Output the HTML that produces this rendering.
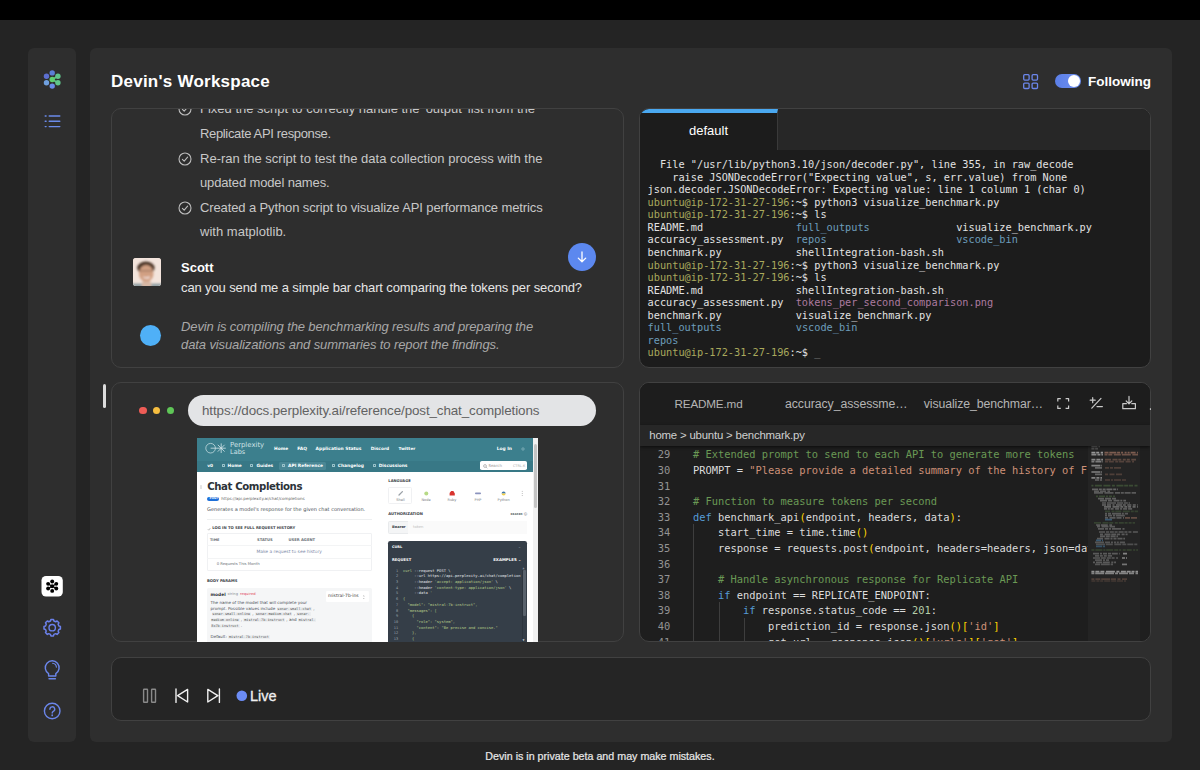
<!DOCTYPE html>
<html><head><meta charset="utf-8"><title>Devin's Workspace</title>
<style>
*{box-sizing:border-box;margin:0;padding:0}
html,body{width:1200px;height:770px;overflow:hidden;background:#242424;font-family:"Liberation Sans",sans-serif;color:#fff}
.abs{position:absolute}
#topbar{left:0;top:0;width:1200px;height:20px;background:#000}
#side{left:28px;top:48px;width:48px;height:694px;background:#2e2e2e;border-radius:6px}
#main{left:90px;top:48px;width:1082px;height:694px;background:#2e2e2e;border-radius:6px}
#title{left:111px;top:71px;font-weight:bold;font-size:17px;letter-spacing:.24px;line-height:22px;color:#fff;white-space:nowrap}
#follow{left:1088px;top:72.7px;font-weight:bold;font-size:13.5px;line-height:18px;color:#fff;white-space:nowrap}
#toggle{left:1054.5px;top:74.3px;width:26px;height:14px;border-radius:7px;background:linear-gradient(90deg,#5b7fe8,#6f8fee)}
#toggle i{position:absolute;right:1px;top:1px;width:12px;height:12px;border-radius:6px;background:#fff}
#live{left:250px;top:686px;font-size:14.5px;line-height:20px;color:#f0f0f0;white-space:nowrap;-webkit-text-stroke:.3px #f0f0f0}
.panel{border:1px solid #414141;border-radius:10px;overflow:hidden}
#chat{left:111px;top:108px;width:513px;height:260px;background:#2e2e2e}
#term{left:639px;top:108px;width:512px;height:260px;background:#1c1c1c}
#browser{left:111px;top:382px;width:513px;height:260px;background:#2e2e2e}
#editor{left:639px;top:382px;width:512px;height:260px;background:#1e1e1e}
#play{left:111px;top:657px;width:1040px;height:64px;background:#252525}

#chat .ln{position:absolute;left:88px;white-space:nowrap;font-size:13px;line-height:24px;color:#c8c8c8}
#chat .ck{position:absolute;left:65.9px;margin-top:.5px;width:14px;height:14px}
#chat .nm{position:absolute;left:69px;top:149.7px;font-weight:bold;font-size:13px;line-height:18px;color:#fff}
#chat .msg{position:absolute;left:69px;top:170px;font-size:13px;line-height:18px;color:#e6e6e6;white-space:nowrap}
#chat .it{position:absolute;left:69px;font-style:italic;font-size:13px;line-height:18px;color:#a8a8a8;white-space:nowrap}
#chat .dot{position:absolute;left:28px;top:216px;width:21px;height:21px;border-radius:50%;background:#4fb0f7}
#chat .av{position:absolute;left:20.6px;top:149.2px;width:28px;height:28px;border-radius:3px;overflow:hidden;background:#ead9cf}
#down{left:567.7px;top:242.7px;width:28px;height:28px;border-radius:50%;background:#5c88ef}

#term .tabs{position:absolute;left:0;top:0;width:100%;height:41px;background:#272727}
#term .tab{position:absolute;left:0;top:0;width:138px;height:41px;background:#1c1c1c;border-top:4px solid #4aa8f0;border-right:1px solid #3a3a3a;text-align:center;font-size:13px;line-height:36px;color:#fff}
#term pre{position:absolute;left:7.6px;top:49px;font-family:"DejaVu Sans Mono","Liberation Mono",monospace;font-size:10.25px;line-height:12.57px;color:#e2e2e2;white-space:pre}
#term .u{color:#a9a95c}#term .d{color:#6c9cbb}#term .p{color:#ab7a9f}

#web{left:197px;top:438px;width:341.2px;height:204px;overflow:hidden;background:#fff;font-family:"DejaVu Sans","Liberation Sans",sans-serif}
#web span{position:absolute;white-space:nowrap}
#web i{position:absolute;display:block}
#web b{font-family:"DejaVu Sans Mono",monospace;font-weight:normal;font-size:3.5px;background:#eceef0;color:#555;padding:0 .8px;border-radius:.6px}
#web em{font-style:normal;color:#b9d08b}
#scrl{left:102.5px;top:384px;width:3px;height:23.5px;border-radius:1.5px;background:#dcdcdc}
#url{left:188px;top:395px;width:408px;height:31px;border-radius:15.5px;background:#e3e4e6;color:#626262;font-size:13.4px;line-height:31px;padding-left:14px;white-space:nowrap}
.tl{width:7.6px;height:7.6px;border-radius:50%;top:406.7px}

#editor .tabs{position:absolute;left:0;top:0;width:100%;height:41.5px;background:#1d1d1d}
#editor .tb{position:absolute;top:11.6px;font-size:12.3px;line-height:18px;color:#b4b4b4;white-space:nowrap}
#editor .bc{position:absolute;left:0;top:41.5px;width:100%;height:21.5px;background:#272727;box-shadow:0 1px 3px rgba(0,0,0,.6);z-index:2}
#editor .bc span{position:absolute;left:9.3px;top:2.2px;font-size:11.4px;line-height:16px;color:#cfcfcf;white-space:nowrap}
#editor .code{position:absolute;left:0;top:63px;width:447.6px;height:196px;overflow:hidden;font-family:"DejaVu Sans Mono","Liberation Mono",monospace;font-size:10.4px;color:#dcdcdc}
#editor .cl{position:absolute;left:53px;margin-top:1.3px;height:15.62px;line-height:15.62px;white-space:pre}
#editor .ln{position:absolute;left:-41.3px;width:18.5px;text-align:right;color:#939393}
#editor .c{color:#6a9955}#editor .k{color:#569cd6}#editor .s{color:#ce9178}#editor .y{color:#ffd700}#editor .n{color:#b5cea8}
#editor .ig{position:absolute;width:1px;background:#3e3e3e}
#editor .mm{position:absolute;left:448px;top:63px;width:51.5px;height:196px;background:#242424}
#editor .sb{position:absolute;left:499.5px;top:63px;width:12px;height:196px;background:#1f1f1f}
#foot{left:0;top:749px;width:1200px;text-align:center;font-size:10.7px;line-height:14px;color:#e8e8e8;-webkit-text-stroke:.2px #e8e8e8}
</style></head><body>
<div id="topbar" class="abs"></div>
<div id="side" class="abs"></div>
<div id="main" class="abs"></div>
<svg class="abs" style="left:0;top:0" width="90" height="770" viewBox="0 0 90 770" fill="none">
<path d="M52.2 79.5 L57.9 76.2 M52.2 79.5 L57.9 82.8" stroke="#5fc48a" stroke-width="1.6"/><circle cx="52.20" cy="72.90" r="2.7" fill="#5b7fd6"/><circle cx="57.92" cy="76.20" r="2.7" fill="#5fc48a"/><circle cx="57.92" cy="82.80" r="2.7" fill="#5fc48a"/><circle cx="52.20" cy="86.10" r="2.7" fill="#6a8be8"/><circle cx="46.48" cy="82.80" r="2.7" fill="#6fa0e0"/><circle cx="46.48" cy="76.20" r="2.7" fill="#5c6fd0"/><circle cx="52.2" cy="79.5" r="2.7" fill="#5fcf6f"/>
<g stroke="#6b8bea" stroke-width="1.4" stroke-linecap="round"><path d="M49.2 116h10.6M49.2 121.3h10.6M49.2 126.6h10.6"/><path d="M45.2 116h.9M45.2 121.3h.9M45.2 126.6h.9"/></g>
<rect x="41.5" y="576" width="21.3" height="20.6" rx="4.5" fill="#fff"/>
<path d="M52.2 586.2 L56.2 583.9 M52.2 586.2 L56.2 588.5 M52.2 586.2 L48.2 588.5 M52.2 586.2 L48.2 583.9" stroke="#000" stroke-width="1.2"/><circle cx="52.20" cy="581.50" r="1.95" fill="#000"/><circle cx="56.27" cy="583.85" r="1.95" fill="#000"/><circle cx="56.27" cy="588.55" r="1.95" fill="#000"/><circle cx="52.20" cy="590.90" r="1.95" fill="#000"/><circle cx="48.13" cy="588.55" r="1.95" fill="#000"/><circle cx="48.13" cy="583.85" r="1.95" fill="#000"/><circle cx="52.2" cy="586.2" r="1.95" fill="#000"/>
<path d="M50.90 619.50 L53.50 619.50 L53.92 621.02 L55.71 621.76 L57.08 620.99 L58.91 622.82 L58.14 624.19 L58.88 625.98 L60.40 626.40 L60.40 629.00 L58.88 629.42 L58.14 631.21 L58.91 632.58 L57.08 634.41 L55.71 633.64 L53.92 634.38 L53.50 635.90 L50.90 635.90 L50.48 634.38 L48.69 633.64 L47.32 634.41 L45.49 632.58 L46.26 631.21 L45.52 629.42 L44.00 629.00 L44.00 626.40 L45.52 625.98 L46.26 624.19 L45.49 622.82 L47.32 620.99 L48.69 621.76 L50.48 621.02 Z" stroke="#6b80ea" stroke-width="1.5" stroke-linejoin="round"/>
<circle cx="52.2" cy="627.7" r="3.2" stroke="#6b80ea" stroke-width="1.4"/>
<g stroke="#6b86ea" stroke-width="1.4" stroke-linecap="round" stroke-linejoin="round">
<path d="M48.6 673.6 A6.9 6.9 0 1 1 55.8 673.6 L55.8 676 L48.6 676 Z"/>
<path d="M49 678.8h6.4"/>
<path d="M52.6 663.3a4.2 4.2 0 0 1 3.8 3.8" stroke-width="1.1"/>
<circle cx="52.2" cy="711" r="7.8"/>
<path d="M49.9 709.2a2.4 2.4 0 1 1 3.4 2.2c-.8.4-1.1.9-1.1 1.7"/>
<path d="M52.2 715.2v.2" stroke-width="1.7"/>
</g>
</svg>
<div id="title" class="abs">Devin's Workspace</div>
<svg class="abs" style="left:1020px;top:70px" width="24" height="24" viewBox="1020 70 24 24" fill="none" stroke="#6b86ea" stroke-width="1.3"><rect x="1023.7" y="74.7" width="5.4" height="5.4" rx="1"/><rect x="1032.1" y="74.7" width="5.4" height="5.4" rx="1"/><rect x="1023.7" y="83.1" width="5.4" height="5.4" rx="1"/><rect x="1032.1" y="83.1" width="5.4" height="5.4" rx="1"/></svg>
<div id="toggle" class="abs"><i></i></div>
<div id="follow" class="abs">Following</div>
<div id="chat" class="abs panel">
<svg class="ck" style="top:-7.5px" viewBox="0 0 14 14" fill="none" stroke="#bdbdbd" stroke-width="1.1" stroke-linecap="round" stroke-linejoin="round"><circle cx="7" cy="7" r="6"/><path d="M4.4 7.3l1.8 1.8 3.4-3.9"/></svg><div class="ln" id="l0" style="top:-12.2px;letter-spacing:-0.003px">Fixed the script to correctly handle the 'output' list from the</div>
<div class="ln" id="l1" style="top:13.0px;letter-spacing:-0.348px">Replicate API response.</div>
<svg class="ck" style="top:42px" viewBox="0 0 14 14" fill="none" stroke="#bdbdbd" stroke-width="1.1" stroke-linecap="round" stroke-linejoin="round"><circle cx="7" cy="7" r="6"/><path d="M4.4 7.3l1.8 1.8 3.4-3.9"/></svg><div class="ln" id="l2" style="top:37.6px;letter-spacing:0.023px">Re-ran the script to test the data collection process with the</div>
<div class="ln" id="l3" style="top:62.2px;letter-spacing:-0.138px">updated model names.</div>
<svg class="ck" style="top:91px" viewBox="0 0 14 14" fill="none" stroke="#bdbdbd" stroke-width="1.1" stroke-linecap="round" stroke-linejoin="round"><circle cx="7" cy="7" r="6"/><path d="M4.4 7.3l1.8 1.8 3.4-3.9"/></svg><div class="ln" id="l4" style="top:86.8px;letter-spacing:-0.120px">Created a Python script to visualize API performance metrics</div>
<div class="ln" id="l5" style="top:111.4px;letter-spacing:0.017px">with matplotlib.</div>
<div class="av"><svg width="28" height="28" viewBox="0 0 28 28"><defs><filter id="bl" x="-20%" y="-20%" width="140%" height="140%"><feGaussianBlur stdDeviation=".8"/></filter></defs><rect width="28" height="28" fill="#f3e4dc"/><g filter="url(#bl)"><path d="M-2 25.6h32v4H-2z" fill="#8f9ea3"/><path d="M8.5 29l1.2-7h7.4l1.6 7z" fill="#d8b8a4"/><ellipse cx="12.9" cy="10" rx="8.7" ry="6.4" fill="#4b3526"/><ellipse cx="13.2" cy="15.4" rx="7.3" ry="8.4" fill="#d2a083"/><path d="M6.4 12.8h13.6" stroke="#8a6a56" stroke-width=".9"/><path d="M10.4 19q3 2 6.2 0" stroke="#f4e6e4" stroke-width="1.5" fill="none"/></g></svg></div>
<div class="nm">Scott</div>
<div class="msg" id="m1" style="letter-spacing:-0.120px">can you send me a simple bar chart comparing the tokens per second?</div>
<div class="dot"></div>
<div class="it" id="i1" style="top:209.0px;letter-spacing:-0.117px">Devin is compiling the benchmarking results and preparing the</div>
<div class="it" id="i2" style="top:227.0px;letter-spacing:-0.104px">data visualizations and summaries to report the findings.</div>
</div>
<div id="down" class="abs"><svg width="28" height="28" viewBox="-.5 -.5 28 28" fill="none" stroke="#fff" stroke-width="1.3" stroke-linecap="round" stroke-linejoin="round"><path d="M13.5 8.5v9.6M9.8 14.6l3.7 3.7 3.7-3.7"/></svg></div>
<div id="term" class="abs panel"><div class="tabs"></div><div class="tab">default</div>
<pre>  File "/usr/lib/python3.10/json/decoder.py", line 355, in raw_decode
    raise JSONDecodeError("Expecting value", s, err.value) from None
json.decoder.JSONDecodeError: Expecting value: line 1 column 1 (char 0)
<span class="u">ubuntu@ip-172-31-27-196</span>:~$ python3 visualize_benchmark.py
<span class="u">ubuntu@ip-172-31-27-196</span>:~$ ls
README.md               <span class="d">full_outputs</span>              visualize_benchmark.py
accuracy_assessment.py  <span class="d">repos</span>                     <span class="d">vscode_bin</span>
benchmark.py            shellIntegration-bash.sh
<span class="u">ubuntu@ip-172-31-27-196</span>:~$ python3 visualize_benchmark.py
<span class="u">ubuntu@ip-172-31-27-196</span>:~$ ls
README.md               shellIntegration-bash.sh
accuracy_assessment.py  <span class="p">tokens_per_second_comparison.png</span>
benchmark.py            visualize_benchmark.py
<span class="d">full_outputs</span>            <span class="d">vscode_bin</span>
<span class="d">repos</span>
<span class="u">ubuntu@ip-172-31-27-196</span>:~$ <span style="color:#8c8c8c">_</span></pre>
</div>
<div id="browser" class="abs panel"></div>
<div id="scrl" class="abs"></div>
<div class="abs tl" style="left:139.2px;background:#ee5c56"></div><div class="abs tl" style="left:152.9px;background:#f6be40"></div><div class="abs tl" style="left:166.7px;background:#5fc657"></div>
<div id="url" class="abs"><span id="urlt" style="letter-spacing:-0.109px">https://docs.perplexity.ai/reference/post_chat_completions</span></div>
<div id="web" class="abs"><i style="left:0.0px;top:0.0px;width:336.0px;height:22.5px;background:#3c7f8d"></i><i style="left:0.0px;top:22.5px;width:336.0px;height:11.2px;background:#387886"></i><i style="left:336.0px;top:0.0px;width:5.2px;height:204.0px;background:#f1f1f1"></i><i style="left:337.0px;top:6.0px;width:3.2px;height:64.0px;background:#c4c4c4;border-radius:1.5px"></i><svg style="position:absolute;left:7px;top:3px" width="24" height="14" viewBox="0 0 24 14" fill="none" stroke="#d4e6ea" stroke-width=".7"><circle cx="6.6" cy="7.2" r="4.8"/><path d="M6.6 7.2h15.2M17.2 2.4v9.6M13.8 3.8l6.8 6.8M20.6 3.8l-6.8 6.8" stroke-width=".8"/></svg><span id="w1" style="left:33.00px;top:2.98px;font-size:6.906px;line-height:8.63px;color:#cfe2e6;">Perplexity</span><span id="w2" style="left:33.00px;top:9.51px;font-size:6.540px;line-height:8.17px;color:#cfe2e6;">Labs</span><span id="n1" style="left:77.00px;top:8.26px;font-size:4.387px;line-height:5.48px;color:#fff;font-weight:bold;">Home</span><span id="n2" style="left:100.20px;top:8.20px;font-size:4.480px;line-height:5.60px;color:#fff;font-weight:bold;">FAQ</span><span id="n3" style="left:118.60px;top:8.24px;font-size:4.421px;line-height:5.53px;color:#fff;font-weight:bold;">Application Status</span><span id="n4" style="left:173.70px;top:8.28px;font-size:4.356px;line-height:5.45px;color:#fff;font-weight:bold;">Discord</span><span id="n5" style="left:201.50px;top:8.33px;font-size:4.269px;line-height:5.34px;color:#fff;font-weight:bold;">Twitter</span><span id="n6" style="left:299.70px;top:8.24px;font-size:4.415px;line-height:5.52px;color:#fff;font-weight:bold;">Log In</span><svg style="position:absolute;left:323.5px;top:8.7px" width="4" height="4" viewBox="0 0 4 4"><circle cx="2" cy="2" r="1.2" fill="none" stroke="#9cc3cb" stroke-width=".6"/></svg><i style="left:82.0px;top:23.6px;width:47.0px;height:8.8px;background:#4a8795;border-radius:1.5px"></i><span id="s0" style="left:10.20px;top:24.91px;font-size:4.309px;line-height:5.39px;color:#fff;font-weight:bold;">v0</span><span id="s1" style="left:30.50px;top:24.86px;font-size:4.387px;line-height:5.48px;color:#fff;font-weight:bold;">Home</span><span id="s2" style="left:59.40px;top:24.88px;font-size:4.354px;line-height:5.44px;color:#fff;font-weight:bold;">Guides</span><span id="s3" style="left:91.00px;top:24.84px;font-size:4.417px;line-height:5.52px;color:#fff;font-weight:bold;">API Reference</span><span id="s4" style="left:140.70px;top:24.84px;font-size:4.412px;line-height:5.51px;color:#fff;font-weight:bold;">Changelog</span><span id="s5" style="left:181.70px;top:24.87px;font-size:4.373px;line-height:5.47px;color:#fff;font-weight:bold;">Discussions</span><i style="left:24.5px;top:25.6px;width:3.2px;height:3.8px;border:.5px solid #9cc3cb;border-radius:.6px"></i><i style="left:53.0px;top:25.6px;width:3.2px;height:3.8px;border:.5px solid #9cc3cb;border-radius:.6px"></i><i style="left:84.5px;top:25.6px;width:3.2px;height:3.8px;border:.5px solid #9cc3cb;border-radius:.6px"></i><i style="left:134.5px;top:25.6px;width:3.2px;height:3.8px;border:.5px solid #9cc3cb;border-radius:.6px"></i><i style="left:175.5px;top:25.6px;width:3.2px;height:3.8px;border:.5px solid #9cc3cb;border-radius:.6px"></i><i style="left:283.0px;top:23.2px;width:47.0px;height:9.0px;background:#fff;border-radius:1.8px"></i><svg style="position:absolute;left:285.5px;top:25.5px" width="5" height="5" viewBox="0 0 5 5" fill="none" stroke="#777" stroke-width=".5"><circle cx="2" cy="2" r="1.4"/><path d="M3.1 3.1l1.2 1.2"/></svg><span id="sr" style="left:291.40px;top:26.02px;font-size:3.961px;line-height:4.95px;color:#999;">Search</span><span id="ck" style="left:315.90px;top:26.03px;font-size:3.465px;line-height:4.33px;color:#aaa;">CTRL-K</span><span id="h1" style="left:10.20px;top:42.62px;font-size:10.2px;line-height:12.75px;color:#2c3238;font-weight:bold;letter-spacing:-0.411px">Chat Completions</span><i style="left:2.6px;top:47.2px;width:2.4px;height:3.8px;background:#e4e4e4;border-radius:.6px"></i><i style="left:10.0px;top:58.5px;width:12.3px;height:4.5px;background:#1e6fd9;border-radius:2.2px"></i><span style="left:12.6px;top:59.05px;font-size:2.8px;line-height:3.50px;color:#fff;font-weight:bold;">POST</span><span id="u1" style="left:24.20px;top:58.24px;font-size:4.096px;line-height:5.12px;color:#666;">https://api.perplexity.ai/chat/completions</span><span id="g1" style="left:10.00px;top:67.66px;font-size:5.026px;line-height:6.28px;color:#4a5057;">Generates a model's response for the given chat conversation.</span><i style="left:10.0px;top:80.7px;width:165.0px;height:0.5px;background:#eef0f1"></i><span id="lg" style="left:15.20px;top:88.23px;font-size:3.788px;line-height:4.74px;color:#3a4046;font-weight:bold;">LOG IN TO SEE FULL REQUEST HISTORY</span><svg style="position:absolute;left:10px;top:89px" width="4" height="4" viewBox="0 0 4 4" fill="none" stroke="#888" stroke-width=".5"><path d="M.8 2.2l1 1 1.6-2.2"/></svg><i style="left:10.0px;top:95.0px;width:165.0px;height:37.5px;border:.5px solid #f0f1f3;border-radius:1px"></i><i style="left:10.0px;top:107.3px;width:165.0px;height:0.5px;background:#f3f4f5"></i><i style="left:10.0px;top:120.2px;width:165.0px;height:0.5px;background:#f3f4f5"></i><span id="t1" style="left:13.00px;top:99.82px;font-size:3.474px;line-height:4.34px;color:#6a7076;font-weight:bold;">TIME</span><span id="t2" style="left:60.00px;top:99.67px;font-size:3.727px;line-height:4.66px;color:#6a7076;font-weight:bold;">STATUS</span><span id="t3" style="left:91.50px;top:99.66px;font-size:3.742px;line-height:4.68px;color:#6a7076;font-weight:bold;">USER AGENT</span><span id="mk" style="left:59.40px;top:111.43px;font-size:4.433px;line-height:5.54px;color:#7d8aa8;">Make a request to see history</span><span id="rq" style="left:19.70px;top:123.93px;font-size:3.792px;line-height:4.74px;color:#6a7076;">0 Requests This Month</span><span id="bp" style="left:10.00px;top:141.05px;font-size:3.760px;line-height:4.70px;color:#3a4046;font-weight:bold;">BODY PARAMS</span><i style="left:10.0px;top:149.7px;width:165.0px;height:57.3px;background:#f5f6f7;border-radius:1.5px"></i><span id="md" style="left:13.50px;top:153.86px;font-size:4.398px;line-height:5.50px;color:#2c3238;font-weight:bold;">model</span><span id="st" style="left:30.50px;top:154.42px;font-size:3.652px;line-height:4.57px;color:#8a9096;">string</span><span id="rqd" style="left:43.00px;top:154.36px;font-size:3.745px;line-height:4.68px;color:#e0455a;">required</span><i style="left:128.5px;top:152.5px;width:43.0px;height:11.0px;background:#fff;border-radius:1.2px"></i><span id="sel" style="left:131.00px;top:155.41px;font-size:4.463px;line-height:5.58px;color:#444;">mistral-7b-ins</span><span style="left:165.0px;top:155.58px;font-size:4.2px;line-height:5.25px;color:#888;transform:scaleY(.8);">⌃</span><span style="left:165.0px;top:156.98px;font-size:4.2px;line-height:5.25px;color:#888;transform:scaleY(.8);">⌄</span><span id="d1" style="left:13.5px;top:161.74px;font-size:4.10px;line-height:5.12px;color:#4a5057;">The name of the model that will complete your</span><span id="d2" style="left:13.5px;top:167.64px;font-size:4.10px;line-height:5.12px;color:#4a5057;">prompt. Possible values include <b>sonar-small-chat</b> ,</span><span id="d3" style="left:14.5px;top:173.44px;font-size:4.10px;line-height:5.12px;color:#4a5057;"><b>sonar-small-online</b> , <b>sonar-medium-chat</b> , <b>sonar-</b></span><span id="d4" style="left:13.5px;top:179.24px;font-size:4.10px;line-height:5.12px;color:#4a5057;"><b>medium-online</b> , <b>mistral-7b-instruct</b> , and <b>mistral-</b></span><span id="d5" style="left:13.5px;top:185.04px;font-size:4.10px;line-height:5.12px;color:#4a5057;"><b>8x7b-instruct</b> .</span><span id="d6" style="left:13.5px;top:195.74px;font-size:4.10px;line-height:5.12px;color:#4a5057;">Default: <b>mistral-7b-instruct</b></span><span id="la" style="left:191.30px;top:40.70px;font-size:3.677px;line-height:4.60px;color:#3a4046;font-weight:bold;">LANGUAGE</span><i style="left:191.3px;top:49.0px;width:23.7px;height:17.3px;border:.5px solid #f0f1f3;border-radius:1.5px"></i><span id="g1a" style="left:203.5px;top:59.61px;font-size:3.5px;line-height:4.38px;color:#7a8086;transform:translateX(-50%);">Shell</span><span id="g2a" style="left:229.0px;top:59.61px;font-size:3.5px;line-height:4.38px;color:#7a8086;transform:translateX(-50%);">Node</span><span id="g3a" style="left:255.0px;top:59.61px;font-size:3.5px;line-height:4.38px;color:#7a8086;transform:translateX(-50%);">Ruby</span><span id="g4a" style="left:281.0px;top:59.61px;font-size:3.5px;line-height:4.38px;color:#7a8086;transform:translateX(-50%);">PHP</span><span id="g5a" style="left:306.6px;top:59.61px;font-size:3.5px;line-height:4.38px;color:#7a8086;transform:translateX(-50%);">Python</span><svg style="position:absolute;left:190px;top:50px" width="140" height="10" viewBox="387 488 140 10"><path d="M399 495l3.4-3.4" stroke="#9aa0a6" stroke-width="1.3" stroke-linecap="round"/><circle cx="426.3" cy="493.4" r="2" fill="#b7da86"/><path d="M449.6 495.6v-2.6l1.6-2h2.2l1.4 2.6v2z" fill="#d8342f"/><rect x="475" y="492.6" width="6" height="1.7" rx=".8" fill="#8b93be"/><path d="M501.6 493.4a2 2 0 0 1 4 0z" fill="#3f77ab"/><path d="M501.6 493.6a2 2 0 0 0 4 0z" fill="#f2cf4a"/><path d="M522.3 491.3v.1M522.3 493.4v.1M522.3 495.5v.1" stroke="#999" stroke-width=".7" stroke-linecap="round"/></svg><span id="au" style="left:191.30px;top:74.16px;font-size:3.744px;line-height:4.68px;color:#3a4046;font-weight:bold;">AUTHORIZATION</span><span id="be" style="left:313.50px;top:75.30px;font-size:2.728px;line-height:3.41px;color:#6a7076;font-weight:bold;">BEARER ⓘ</span><i style="left:191.3px;top:83.0px;width:138.7px;height:13.0px;background:#f4f5f6;border:.5px solid #e8eaec;border-radius:1.5px"></i><i style="left:211.3px;top:83.3px;width:118.4px;height:12.4px;background:#fafafa"></i><span id="br" style="left:195.00px;top:87.24px;font-size:3.623px;line-height:4.53px;color:#3a4046;font-weight:bold;">Bearer</span><span id="tk" style="left:216.00px;top:87.15px;font-size:3.752px;line-height:4.69px;color:#bbb;">token</span><i style="left:191.3px;top:102.8px;width:138.9px;height:109.2px;background:#353e48;border-radius:2.2px"></i><span id="cu" style="left:195.00px;top:107.44px;font-size:3.459px;line-height:4.32px;color:#fff;font-weight:bold;">CURL</span><span style="left:321.0px;top:107.35px;font-size:3.6px;line-height:4.50px;color:#8a939c;">⌄</span><span id="rqq" style="left:195.00px;top:120.29px;font-size:3.698px;line-height:4.62px;color:#fff;font-weight:bold;">REQUEST</span><span id="ex" style="left:296.20px;top:120.14px;font-size:3.932px;line-height:4.91px;color:#fff;font-weight:bold;">EXAMPLES ⌄</span><i style="left:326.0px;top:131.5px;width:3.3px;height:46.5px;background:#59626c;border-radius:1px"></i><i style="left:325.3px;top:131.5px;width:0.7px;height:72.5px;background:#2d353e"></i><span style="left:325.5px;top:200.77px;font-size:2.6px;line-height:3.25px;color:#c8ced4;">▼</span><span style="left:325.5px;top:128.98px;font-size:2.6px;line-height:3.25px;color:#8a939c;">▲</span><span style="left:196.0px;top:130.54px;font-size:3.6px;line-height:4.12px;color:#9aa3ac;font-family:'DejaVu Sans Mono',monospace;width:5.2px;text-align:right;">1</span><span style="left:206.0px;top:130.54px;font-size:3.75px;line-height:4.12px;color:#e6e9ec;font-family:'DejaVu Sans Mono',monospace;white-space:pre;"><em>curl</em> --request POST \</span><span style="left:196.0px;top:136.26px;font-size:3.6px;line-height:4.12px;color:#9aa3ac;font-family:'DejaVu Sans Mono',monospace;width:5.2px;text-align:right;">2</span><span style="left:206.0px;top:136.26px;font-size:3.75px;line-height:4.12px;color:#e6e9ec;font-family:'DejaVu Sans Mono',monospace;white-space:pre;">     --url https://api.perplexity.ai/chat/completion</span><span style="left:196.0px;top:141.98px;font-size:3.6px;line-height:4.12px;color:#9aa3ac;font-family:'DejaVu Sans Mono',monospace;width:5.2px;text-align:right;">3</span><span style="left:206.0px;top:141.98px;font-size:3.75px;line-height:4.12px;color:#e6e9ec;font-family:'DejaVu Sans Mono',monospace;white-space:pre;">     --header <em>'accept: application/json'</em> \</span><span style="left:196.0px;top:147.70px;font-size:3.6px;line-height:4.12px;color:#9aa3ac;font-family:'DejaVu Sans Mono',monospace;width:5.2px;text-align:right;">4</span><span style="left:206.0px;top:147.70px;font-size:3.75px;line-height:4.12px;color:#e6e9ec;font-family:'DejaVu Sans Mono',monospace;white-space:pre;">     --header <em>'content-type: application/json'</em> \</span><span style="left:196.0px;top:153.42px;font-size:3.6px;line-height:4.12px;color:#9aa3ac;font-family:'DejaVu Sans Mono',monospace;width:5.2px;text-align:right;">5</span><span style="left:206.0px;top:153.42px;font-size:3.75px;line-height:4.12px;color:#e6e9ec;font-family:'DejaVu Sans Mono',monospace;white-space:pre;">     --data <em>'</em></span><span style="left:196.0px;top:159.14px;font-size:3.6px;line-height:4.12px;color:#9aa3ac;font-family:'DejaVu Sans Mono',monospace;width:5.2px;text-align:right;">6</span><span style="left:206.0px;top:159.14px;font-size:3.75px;line-height:4.12px;color:#e6e9ec;font-family:'DejaVu Sans Mono',monospace;white-space:pre;"><em>{</em></span><span style="left:196.0px;top:164.86px;font-size:3.6px;line-height:4.12px;color:#9aa3ac;font-family:'DejaVu Sans Mono',monospace;width:5.2px;text-align:right;">7</span><span style="left:206.0px;top:164.86px;font-size:3.75px;line-height:4.12px;color:#e6e9ec;font-family:'DejaVu Sans Mono',monospace;white-space:pre;"><em>  "model": "mistral-7b-instruct",</em></span><span style="left:196.0px;top:170.58px;font-size:3.6px;line-height:4.12px;color:#9aa3ac;font-family:'DejaVu Sans Mono',monospace;width:5.2px;text-align:right;">8</span><span style="left:206.0px;top:170.58px;font-size:3.75px;line-height:4.12px;color:#e6e9ec;font-family:'DejaVu Sans Mono',monospace;white-space:pre;"><em>  "messages": [</em></span><span style="left:196.0px;top:176.30px;font-size:3.6px;line-height:4.12px;color:#9aa3ac;font-family:'DejaVu Sans Mono',monospace;width:5.2px;text-align:right;">9</span><span style="left:206.0px;top:176.30px;font-size:3.75px;line-height:4.12px;color:#e6e9ec;font-family:'DejaVu Sans Mono',monospace;white-space:pre;"><em>    {</em></span><span style="left:196.0px;top:182.02px;font-size:3.6px;line-height:4.12px;color:#9aa3ac;font-family:'DejaVu Sans Mono',monospace;width:5.2px;text-align:right;">10</span><span style="left:206.0px;top:182.02px;font-size:3.75px;line-height:4.12px;color:#e6e9ec;font-family:'DejaVu Sans Mono',monospace;white-space:pre;"><em>      "role": "system",</em></span><span style="left:196.0px;top:187.74px;font-size:3.6px;line-height:4.12px;color:#9aa3ac;font-family:'DejaVu Sans Mono',monospace;width:5.2px;text-align:right;">11</span><span style="left:206.0px;top:187.74px;font-size:3.75px;line-height:4.12px;color:#e6e9ec;font-family:'DejaVu Sans Mono',monospace;white-space:pre;"><em>      "content": "Be precise and concise."</em></span><span style="left:196.0px;top:193.46px;font-size:3.6px;line-height:4.12px;color:#9aa3ac;font-family:'DejaVu Sans Mono',monospace;width:5.2px;text-align:right;">12</span><span style="left:206.0px;top:193.46px;font-size:3.75px;line-height:4.12px;color:#e6e9ec;font-family:'DejaVu Sans Mono',monospace;white-space:pre;"><em>    },</em></span><span style="left:196.0px;top:199.18px;font-size:3.6px;line-height:4.12px;color:#9aa3ac;font-family:'DejaVu Sans Mono',monospace;width:5.2px;text-align:right;">13</span><span style="left:206.0px;top:199.18px;font-size:3.75px;line-height:4.12px;color:#e6e9ec;font-family:'DejaVu Sans Mono',monospace;white-space:pre;"><em>    {</em></span></div>
<div id="editor" class="abs panel"><div class="tabs"></div>
<div class="tb" id="tb1" style="left:34.5px;font-size:11.7px;letter-spacing:-0.167px">README.md</div><div class="tb" id="tb2" style="left:145px;letter-spacing:-0.067px">accuracy_assessme…</div><div class="tb" id="tb3" style="left:283.7px;letter-spacing:-0.088px">visualize_benchmar…</div>
<div class="bc"><span id="bct" style="letter-spacing:-0.194px">home &gt; ubuntu &gt; benchmark.py</span></div>
<div class="code"><div class="cl" style="top:0.00px"><span class="ln">29</span><span class="c"># Extended prompt to send to each API to generate more tokens</span></div><div class="cl" style="top:15.62px"><span class="ln">30</span>PROMPT = <span class="s">"Please provide a detailed summary of the history of France, from the Gauls to the Fifth Republic."</span></div><div class="cl" style="top:31.24px"><span class="ln">31</span></div><div class="cl" style="top:46.86px"><span class="ln">32</span><span class="c"># Function to measure tokens per second</span></div><div class="cl" style="top:62.48px"><span class="ln">33</span><span class="k">def</span> benchmark_api<span class="y">(</span>endpoint, headers, data<span class="y">)</span>:</div><div class="cl" style="top:78.10px"><span class="ln">34</span>    start_time = time.time<span class="y">()</span></div><div class="cl" style="top:93.72px"><span class="ln">35</span>    response = requests.post<span class="y">(</span>endpoint, headers=headers, json=data<span class="y">)</span></div><div class="cl" style="top:109.34px"><span class="ln">36</span></div><div class="cl" style="top:124.96px"><span class="ln">37</span>    <span class="c"># Handle asynchronous response for Replicate API</span></div><div class="cl" style="top:140.58px"><span class="ln">38</span>    <span class="k">if</span> endpoint == REPLICATE_ENDPOINT:</div><div class="cl" style="top:156.20px"><span class="ln">39</span>        <span class="k">if</span> response.status_code == <span class="n">201</span>:</div><div class="cl" style="top:171.82px"><span class="ln">40</span>            prediction_id = response.json<span class="y">()[</span><span class="s">'id'</span><span class="y">]</span></div><div class="cl" style="top:187.44px"><span class="ln">41</span>            get_url = response.json<span class="y">()[</span><span class="s">'urls'</span><span class="y">][</span><span class="s">'get'</span><span class="y">]</span></div><i class="ig" style="left:53.3px;top:78px;height:120px"></i><i class="ig" style="left:78.5px;top:156px;height:42px"></i><i class="ig" style="left:103.7px;top:172px;height:26px"></i></div>
<div class="mm"></div><div class="sb"></div>
</div>
<svg class="abs" style="left:1088px;top:445px;filter:blur(.5px);opacity:.62" width="51" height="142" viewBox="1088 445 51 142" fill="none" stroke-width="1.7"><path d="M1091.4 446.4h6.0M1098.4 446.4h1.6M1098.0 498.6h6.0M1105.0 498.6h6.0M1112.0 498.6h4.0M1100.0 500.7h7.0M1108.0 500.7h4.0M1113.5 500.7h6.0M1120.3 500.7h2.0M1123.3 500.7h2.7" stroke="#d4d4d4" stroke-opacity="0.55"/><path d="M1091.4 448.6h3.0M1095.2 448.6h2.8M1096.0 544.3h9.0M1105.8 544.3h7.0M1114.3 544.3h7.0M1122.3 544.3h4.0M1127.3 544.3h6.0M1134.3 544.3h3.0" stroke="#d4d4d4" stroke-opacity="0.4"/><path d="M1091.4 452.6h4.0M1096.2 452.6h3.0M1100.7 452.6h2.3" stroke="#ffffff" stroke-opacity="0.85"/><path d="M1104.5 452.6h4.0M1109.3 452.6h7.0M1117.1 452.6h3.0M1121.1 452.6h2.0M1124.6 452.6h2.0M1127.6 452.6h2.0M1130.6 452.6h5.0M1137.1 452.6h0.9" stroke="#ce9178" stroke-opacity="0.85"/><path d="M1091.4 454.6h5.0M1097.4 454.6h3.0M1101.4 454.6h1.6M1091.4 459.7h4.0M1096.4 459.7h4.0M1101.2 459.7h1.8" stroke="#ffffff" stroke-opacity="0.75"/><path d="M1104.5 454.6h3.0M1108.3 454.6h4.0M1113.8 454.6h7.0M1121.8 454.6h9.0M1132.3 454.6h5.7" stroke="#ce9178" stroke-opacity="0.7"/><path d="M1105.0 459.7h6.0M1112.5 459.7h5.0M1118.3 459.7h3.0M1122.8 459.7h3.0M1126.8 459.7h3.0M1131.3 459.7h4.7" stroke="#ce9178" stroke-opacity="0.55"/><path d="M1091.4 461.7h3.0M1095.4 461.7h6.0M1102.4 461.7h0.6" stroke="#ffffff" stroke-opacity="0.65"/><path d="M1105.0 461.7h3.0M1108.8 461.7h5.0M1115.3 461.7h3.0M1119.1 461.7h5.0M1125.6 461.7h5.0M1132.1 461.7h1.9" stroke="#ce9178" stroke-opacity="0.45"/><path d="M1091.4 465.7h9.0M1101.4 465.7h0.6M1091.4 472.0h9.0M1101.2 472.0h0.8M1091.4 477.9h4.0M1096.4 477.9h3.0M1100.4 477.9h1.6M1123.0 553.7h4.0M1122.0 558.0h3.0M1126.0 558.0h1.0M1091.4 573.4h3.0M1095.2 573.4h9.0M1105.0 573.4h9.0M1115.0 573.4h3.0M1119.0 573.4h9.0M1129.0 573.4h5.0M1135.5 573.4h2.5" stroke="#ffffff" stroke-opacity="0.7"/><path d="M1095.0 467.9h7.0M1095.0 474.3h7.0M1095.0 480.0h4.0M1099.8 480.0h2.2M1092.0 489.3h6.0M1098.8 489.3h3.0M1102.6 489.3h3.0M1106.4 489.3h6.0M1113.2 489.3h3.0M1117.2 489.3h0.8M1102.0 505.0h4.0M1107.0 505.0h4.0M1112.5 505.0h2.0M1116.0 505.0h6.0M1122.8 505.0h3.0M1127.3 505.0h4.0M1132.8 505.0h3.0M1137.3 505.0h0.7M1104.0 506.8h7.0M1112.5 506.8h7.0M1120.3 506.8h3.0M1124.3 506.8h3.0M1128.1 506.8h3.0M1132.6 506.8h3.0M1137.1 506.8h0.9" stroke="#d4d4d4" stroke-opacity="0.6"/><path d="M1105.0 467.9h4.0M1110.0 467.9h3.0M1114.0 467.9h7.0M1105.0 474.3h3.0M1109.5 474.3h5.0M1116.0 474.3h6.0M1105.0 480.0h5.0M1111.0 480.0h2.0M1114.0 480.0h7.0M1122.0 480.0h4.0M1091.4 579.2h3.0M1095.4 579.2h5.0M1101.2 579.2h9.0M1111.0 579.2h5.0M1117.5 579.2h3.0M1122.0 579.2h5.0" stroke="#ce9178" stroke-opacity="0.4"/><path d="M1091.4 485.7h2.0M1094.9 485.7h7.0M1103.4 485.7h7.0M1111.9 485.7h3.0M1116.4 485.7h7.0M1124.2 485.7h4.0M1129.0 485.7h4.0M1134.5 485.7h3.0" stroke="#6a9955" stroke-opacity="0.55"/><path d="M1094.0 491.4h5.0M1100.0 491.4h6.0M1107.5 491.4h2.5M1094.0 492.9h9.0M1104.5 492.9h9.0M1115.0 492.9h5.0M1120.8 492.9h3.0M1124.6 492.9h6.0M1131.6 492.9h4.4M1102.0 503.0h4.0M1107.0 503.0h9.0M1117.0 503.0h6.0M1123.8 503.0h4.0M1128.6 503.0h1.4M1104.0 508.8h3.0M1107.8 508.8h2.0M1110.6 508.8h3.0M1115.1 508.8h4.0M1120.1 508.8h2.0M1123.1 508.8h4.0M1128.1 508.8h4.0M1105.0 513.6h2.0M1108.0 513.6h3.0M1112.0 513.6h9.0M1121.8 513.6h2.0M1124.8 513.6h3.2M1105.0 515.7h2.0M1108.0 515.7h4.0M1113.0 515.7h2.0M1115.8 515.7h9.0M1105.0 517.9h3.0M1109.5 517.9h6.0M1116.5 517.9h5.0M1123.0 517.9h1.0M1096.0 525.0h4.0M1100.8 525.0h7.0M1109.3 525.0h2.7M1097.0 526.6h3.0M1101.5 526.6h7.0M1109.5 526.6h5.5M1098.0 528.8h6.0M1105.0 528.8h3.0M1109.0 528.8h2.0M1112.0 528.8h9.0M1122.5 528.8h2.0M1099.0 532.0h6.0M1106.0 532.0h3.0M1109.8 532.0h4.0M1114.6 532.0h3.0M1118.6 532.0h5.0M1124.4 532.0h3.0M1128.4 532.0h3.0M1132.9 532.0h5.0M1100.0 534.3h3.0M1104.5 534.3h6.0M1111.3 534.3h5.0M1117.1 534.3h3.0M1121.6 534.3h3.0M1125.6 534.3h2.0M1100.0 536.4h5.0M1105.8 536.4h4.0M1110.6 536.4h5.0M1116.4 536.4h1.6M1097.0 538.6h6.0M1104.5 538.6h5.0M1110.5 538.6h2.0M1113.5 538.6h3.0M1117.5 538.6h5.0M1123.3 538.6h1.7M1093.0 553.7h6.0M1100.0 553.7h2.0M1103.0 553.7h4.0M1108.0 553.7h3.0M1111.8 553.7h6.0M1119.3 553.7h0.7M1093.0 558.0h7.0M1100.8 558.0h5.0M1106.8 558.0h4.0M1111.6 558.0h3.0M1116.1 558.0h1.9M1093.0 562.4h2.0M1096.0 562.4h6.0M1102.8 562.4h7.0M1111.3 562.4h2.0M1114.1 562.4h1.9" stroke="#d4d4d4" stroke-opacity="0.5"/><path d="M1096.0 496.4h2.0M1099.0 496.4h6.0M1106.0 496.4h2.0M1109.0 496.4h3.0M1113.0 496.4h2.0" stroke="#6a9955" stroke-opacity="0.5"/><path d="M1105.0 511.4h5.0M1111.5 511.4h3.0M1115.3 511.4h6.0M1122.8 511.4h7.0M1130.8 511.4h3.0M1134.6 511.4h3.4M1094.0 522.9h7.0M1102.5 522.9h6.0M1109.3 522.9h4.0M1114.8 522.9h3.0M1118.8 522.9h5.0M1124.6 522.9h3.0M1128.6 522.9h3.0M1132.6 522.9h2.4" stroke="#6a9955" stroke-opacity="0.4"/><path d="M1125.0 517.9h5.0M1131.0 517.9h6.0" stroke="#ce9178" stroke-opacity="0.6"/><path d="M1105.0 519.6h7.0M1096.0 540.4h5.0M1102.0 540.4h1.0" stroke="#569cd6" stroke-opacity="0.7"/><path d="M1095.0 542.4h9.0M1105.0 542.4h5.0M1111.0 542.4h2.0M1114.0 542.4h2.0M1116.8 542.4h2.0M1119.8 542.4h5.2M1095.0 555.8h4.0M1099.8 555.8h3.0M1103.8 555.8h3.0M1107.8 555.8h4.2M1095.0 560.2h7.0M1103.0 560.2h2.0M1106.0 560.2h3.0M1095.0 564.4h5.0M1100.8 564.4h9.0M1110.6 564.4h2.4" stroke="#d4d4d4" stroke-opacity="0.45"/><path d="M1096.0 546.4h6.0M1102.8 546.4h2.2" stroke="#569cd6" stroke-opacity="0.6"/><path d="M1091.4 550.0h3.0M1095.4 550.0h7.0M1103.4 550.0h2.0M1106.2 550.0h7.0M1114.2 550.0h4.0M1119.2 550.0h2.0M1122.7 550.0h3.0M1126.7 550.0h5.0M1133.2 550.0h2.0M1136.2 550.0h1.8" stroke="#6a9955" stroke-opacity="0.45"/><path d="M1122.0 564.4h5.0" stroke="#ffffff" stroke-opacity="0.6"/><path d="M1091.4 571.6h3.0M1095.4 571.6h4.0M1100.4 571.6h4.0M1105.9 571.6h9.0M1116.4 571.6h3.0M1120.9 571.6h5.0M1126.7 571.6h4.0M1131.5 571.6h3.0M1135.5 571.6h2.5" stroke="#ffffff" stroke-opacity="0.8"/><path d="M1091.4 581.0h4.0M1096.4 581.0h3.0M1100.2 581.0h3.0M1104.2 581.0h6.0M1111.2 581.0h5.0M1117.0 581.0h6.0M1124.0 581.0h2.0" stroke="#ce9178" stroke-opacity="0.3"/></svg>
<svg class="abs" style="left:1050px;top:392px" width="104" height="24" viewBox="1050 392 104 24" fill="none" stroke="#cacaca" stroke-width="1.2" stroke-linecap="round" stroke-linejoin="round">
<path d="M1057.8 401.6v-3h3M1065.6 398.6h3v3M1068.6 405.4v3h-3M1060.8 408.4h-3v-3" stroke-linecap="butt"/>
<path d="M1090.2 400.2h5M1092.7 397.7v5M1101 398.4l-9.2 9.8M1097 406.6h5.4"/>
<path d="M1129 396.4v7.2M1126.2 401l2.8 2.8 2.8-2.8M1126.4 403.7h-3.6v5h12.6v-5h-3.6"/>
<path d="M1150.4 408.6v1" stroke-width="1"/>
</svg>
<div id="play" class="abs panel"></div>
<svg class="abs" style="left:135px;top:680px" width="120" height="32" viewBox="135 680 120 32" fill="none" stroke-width="1.4" stroke-linejoin="round" stroke-linecap="round">
<rect x="143.6" y="689.2" width="3.9" height="13" stroke="#8a8a8a" rx=".5"/><rect x="151.6" y="689.2" width="3.9" height="13" stroke="#8a8a8a" rx=".5"/>
<path d="M176 689v13.4M187.6 689.4L177.6 695.7L187.6 702Z" stroke="#f0f0f0"/>
<path d="M219.4 689v13.4M207.8 689.4L217.8 695.7L207.8 702Z" stroke="#f0f0f0"/>
<circle cx="241.8" cy="695.8" r="5.3" fill="#6c8cf5" stroke="none"/>
</svg>
<div id="live" class="abs">Live</div>
<div id="foot" class="abs">Devin is in private beta and may make mistakes.</div>
</body></html>
